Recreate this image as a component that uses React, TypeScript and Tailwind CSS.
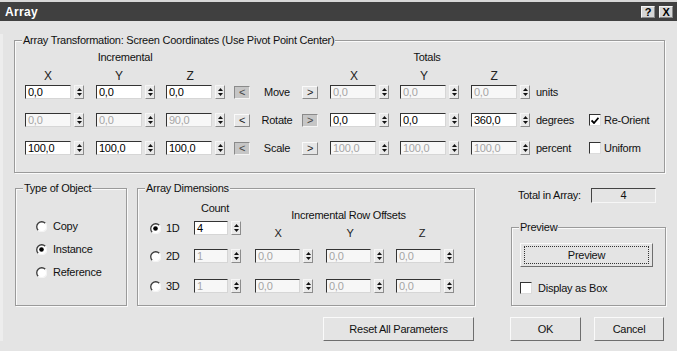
import React from "react";
import clsx from "clsx";

function Tri({ up }: { up?: boolean }) {
  return (
    <svg width="5" height="3" viewBox="0 0 5 3">
      <path d={up ? "M2.5 0 L5 3 L0 3 Z" : "M0 0 L5 0 L2.5 3 Z"} fill="#111" />
    </svg>
  );
}

function Spinner() {
  return (
    <div className="ml-[3px] flex h-[14px] w-[10px] flex-col items-center justify-center gap-[2px] border border-t-[#f6f6f6] border-l-[#f6f6f6] border-r-[#8c8c8c] border-b-[#8c8c8c] bg-[#e9e9e9]">
      <Tri up />
      <Tri />
    </div>
  );
}

function Field({ v, dis, w = "w-[46px]" }: { v: string; dis?: boolean; w?: string }) {
  return (
    <div className="flex items-center">
      <div
        className={clsx(
          w,
          "h-[14px] border border-t-[#333] border-l-[#333] border-r-[#d6d6d6] border-b-[#d6d6d6] pl-[2px] text-[11px] leading-[12px]",
          dis ? "bg-[#f7f7f7] text-[#a5a5a5]" : "bg-white text-black"
        )}
      >
        {v}
      </div>
      <Spinner />
    </div>
  );
}

function ArrowBtn({ ch, down }: { ch: string; down?: boolean }) {
  return (
    <div
      className={clsx(
        "flex h-[13px] w-[16px] items-center justify-center border text-[11px] leading-[11px]",
        down
          ? "border-t-[#8a8a8a] border-l-[#8a8a8a] border-r-[#f4f4f4] border-b-[#f4f4f4] bg-[#c6c6c6] text-[#444]"
          : "border-t-[#fafafa] border-l-[#fafafa] border-r-[#8a8a8a] border-b-[#8a8a8a] bg-[#e6e6e6] text-[#222]"
      )}
    >
      {ch}
    </div>
  );
}

function Check({ on }: { on?: boolean }) {
  return (
    <div className="flex h-[12px] w-[12px] items-center justify-center border border-t-[#333] border-l-[#333] border-r-[#dcdcdc] border-b-[#dcdcdc] bg-white">
      {on && (
        <svg width="8" height="7" viewBox="0 0 8 7">
          <path d="M0.5 3.5 L3 6 L7.5 0.8" stroke="#000" strokeWidth="1.8" fill="none" />
        </svg>
      )}
    </div>
  );
}

function Radio({ on }: { on?: boolean }) {
  return (
    <svg width="11" height="11" viewBox="0 0 11 11">
      <circle cx="5.5" cy="5.5" r="5" fill="#fff" />
      <path d="M9.3 2.2 A5 5 0 0 0 2.2 9.3" stroke="#3a3a3a" strokeWidth="1.3" fill="none" />
      <path d="M9.3 2.2 A5 5 0 0 1 2.2 9.3" stroke="#f4f4f4" strokeWidth="1.3" fill="none" />
      {on && <circle cx="5.5" cy="5.5" r="2.3" fill="#000" />}
    </svg>
  );
}

function Btn({ children, w, focus }: { children: React.ReactNode; w: string; focus?: boolean }) {
  return (
    <div
      className={clsx(
        w,
        "flex h-[24px] items-center justify-center border border-t-[#fafafa] border-l-[#fafafa] border-r-[#6e6e6e] border-b-[#6e6e6e] bg-[#e4e4e4] text-[11px] text-[#111]"
      )}
    >
      {focus ? (
        <div className="flex h-[18px] w-[calc(100%-6px)] items-center justify-center border border-dotted border-[#333]">
          {children}
        </div>
      ) : (
        children
      )}
    </div>
  );
}

const legend = "ml-[7px] bg-[#e4e4e4] px-[1px] text-[11px] leading-[13px] text-[#111]";
const box =
  "border border-[#9a9a9a] shadow-[inset_1px_1px_0_#fafafa,1px_1px_0_#fafafa]";

type Row = {
  inc: string[];
  incDis?: boolean;
  label: string;
  tot: string[];
  totDis?: boolean;
  leftDown?: boolean;
  rightDown?: boolean;
  unit: string;
  check?: { on: boolean; text: string };
};

const rows: Row[] = [
  { inc: ["0,0", "0,0", "0,0"], label: "Move", tot: ["0,0", "0,0", "0,0"], totDis: true, leftDown: true, unit: "units" },
  {
    inc: ["0,0", "0,0", "90,0"],
    incDis: true,
    label: "Rotate",
    tot: ["0,0", "0,0", "360,0"],
    rightDown: true,
    unit: "degrees",
    check: { on: true, text: "Re-Orient" },
  },
  {
    inc: ["100,0", "100,0", "100,0"],
    label: "Scale",
    tot: ["100,0", "100,0", "100,0"],
    totDis: true,
    leftDown: true,
    unit: "percent",
    check: { on: false, text: "Uniform" },
  },
];

export default function App() {
  return (
    <div className="h-[351px] w-[677px] overflow-hidden bg-[#e4e4e4] font-['Liberation_Sans',Arial,sans-serif] text-[11px] tracking-[-0.25px] text-[#111]">
      {/* title bar */}
      <div className="border-t-2 border-[#d8d8d8]">
        <div className="flex h-[19px] items-center justify-between bg-[#404040] pl-[5px] pr-[4px]">
          <span className="text-[12px] font-bold tracking-[0.3px] text-white">Array</span>
          <div className="flex gap-[4px]">
            <div className="flex h-[12px] w-[14px] items-center justify-center border border-t-[#f4f4f4] border-l-[#f4f4f4] border-r-[#888] border-b-[#888] bg-[#d6d6d6] text-[11px] font-bold leading-[12px] text-black">?</div>
            <div className="flex h-[12px] w-[14px] items-center justify-center border border-t-[#f4f4f4] border-l-[#f4f4f4] border-r-[#888] border-b-[#888] bg-[#d6d6d6] text-[11px] font-bold leading-[12px] text-black">X</div>
          </div>
        </div>
      </div>

      <div className="border-l-[3px] border-[#ededed] pl-[11px] pr-[12px]">
        {/* transformation group */}
        <fieldset className={clsx("mt-[13px] h-[139px]", box)}>
          <legend className={legend}>Array Transformation: Screen Coordinates (Use Pivot Point Center)</legend>
          <div className="pl-[10px]">
            <div className="mt-[4px] flex h-[13px] leading-[13px]">
              <div className="w-[200px] text-center">Incremental</div>
              <div className="ml-[102px] w-[200px] text-center">Totals</div>
            </div>
            <div className="mt-[6px] flex h-[13px] text-[12px] leading-[13px] text-[#222]">
              {["X", "Y", "Z"].map((l, i) => (
                <div key={l} className={clsx("w-[46px] text-center", i > 0 && "ml-[25px]")}>{l}</div>
              ))}
              {["X", "Y", "Z"].map((l, i) => (
                <div key={"t" + l} className={clsx("w-[46px] text-center", i === 0 ? "ml-[118px]" : "ml-[24px]")}>{l}</div>
              ))}
            </div>
            <div className="mt-[2px] flex flex-col gap-[14px]">
              {rows.map((r) => (
                <div key={r.label} className="flex h-[14px] items-center">
                  <Field v={r.inc[0]} dis={r.incDis} />
                  <div className="ml-[12px]"><Field v={r.inc[1]} dis={r.incDis} /></div>
                  <div className="ml-[11px]"><Field v={r.inc[2]} dis={r.incDis} /></div>
                  <div className="ml-[9px]"><ArrowBtn ch="<" down={r.leftDown} /></div>
                  <div className="w-[52px] pl-[2px] text-center">{r.label}</div>
                  <ArrowBtn ch=">" down={r.rightDown} />
                  <div className="ml-[12px]"><Field v={r.tot[0]} dis={r.totDis} /></div>
                  <div className="ml-[11px]"><Field v={r.tot[1]} dis={r.totDis} /></div>
                  <div className="ml-[12px]"><Field v={r.tot[2]} dis={r.totDis} /></div>
                  <div className="ml-[6px] w-[53px]">{r.unit}</div>
                  {r.check && (
                    <div className="flex items-center gap-[3px]">
                      <Check on={r.check.on} />
                      <span>{r.check.text}</span>
                    </div>
                  )}
                </div>
              ))}
            </div>
          </div>
        </fieldset>

        {/* lower part */}
        <div className="mt-[9px] flex items-start">
          <div className="ml-[1px] flex">
            <fieldset className={clsx("h-[124px] w-[112px]", box)}>
              <legend className={legend}>Type of Object</legend>
              <div className="flex flex-col gap-[10px] pl-[20px] pt-[25px]">
                {[
                  ["Copy", false],
                  ["Instance", true],
                  ["Reference", false],
                ].map(([t, on]) => (
                  <div key={t as string} className="flex h-[13px] items-center gap-[6px]">
                    <Radio on={on as boolean} />
                    <span>{t as string}</span>
                  </div>
                ))}
              </div>
            </fieldset>

            <fieldset className={clsx("ml-[10px] h-[124px] w-[338px]", box)}>
              <legend className={legend}>Array Dimensions</legend>
              <div className="flex pl-[12px]">
                <div className="flex w-[44px] flex-col pt-[26px]">
                  {["1D", "2D", "3D"].map((d, i) => (
                    <div key={d} className={clsx("flex h-[14px] items-center gap-[5px]", i === 1 && "mt-[14px]", i === 2 && "mt-[16px]")}>
                      <Radio on={i === 0} />
                      <span>{d}</span>
                    </div>
                  ))}
                </div>
                <div className="flex flex-col">
                  <div className="mt-[7px] h-[13px] w-[42px] text-center leading-[13px]">Count</div>
                  <div className="mt-[6px]"><Field v="4" w="w-[34px]" /></div>
                  <div className="mt-[14px]"><Field v="1" dis w="w-[34px]" /></div>
                  <div className="mt-[16px]"><Field v="1" dis w="w-[34px]" /></div>
                </div>
                <div className="ml-[14px] flex flex-col">
                  <div className="mt-[14px] h-[13px] pr-[12px] text-center leading-[13px]">Incremental Row Offsets</div>
                  <div className="mt-[5px] flex h-[13px] leading-[13px] text-[#222]">
                    {["X", "Y", "Z"].map((l, i) => (
                      <div key={l} className={clsx("w-[46px] text-center", i > 0 && "ml-[26px]")}>{l}</div>
                    ))}
                  </div>
                  {[0, 1].map((k) => (
                    <div key={k} className={clsx("flex", k === 0 ? "mt-[9px]" : "mt-[16px]")}>
                      <Field v="0,0" dis w="w-[45px]" />
                      <div className="ml-[13px]"><Field v="0,0" dis w="w-[45px]" /></div>
                      <div className="ml-[12px]"><Field v="0,0" dis w="w-[45px]" /></div>
                    </div>
                  ))}
                </div>
              </div>
            </fieldset>
          </div>

          <div className="ml-[36px] flex w-[155px] flex-col">
            <div className="mt-[6px] flex h-[15px] items-center pl-[7px]">
              <span>Total in Array:</span>
              <div className="ml-auto mr-[10px] flex h-[15px] w-[65px] items-center justify-center border border-t-[#444] border-l-[#444] border-r-[#f6f6f6] border-b-[#f6f6f6] bg-[#e4e4e4]">
                4
              </div>
            </div>
            <fieldset className={clsx("mt-[18px] h-[85px] w-[155px]", box)}>
              <legend className={legend}>Preview</legend>
              <div className="pl-[8px] pt-[9px]">
                <Btn w="w-[133px]" focus>
                  <span>Preview</span>
                </Btn>
                <div className="mt-[13px] flex items-center gap-[6px]">
                  <Check />
                  <span>Display as Box</span>
                </div>
              </div>
            </fieldset>
          </div>
        </div>

        <div className="mt-[11px] flex">
          <div className="flex w-[460px] justify-end">
            <Btn w="w-[151px]"><span>Reset All Parameters</span></Btn>
          </div>
          <div className="ml-[36px]"><Btn w="w-[71px]"><span>OK</span></Btn></div>
          <div className="ml-[13px]"><Btn w="w-[70px]"><span>Cancel</span></Btn></div>
        </div>
      </div>
    </div>
  );
}
